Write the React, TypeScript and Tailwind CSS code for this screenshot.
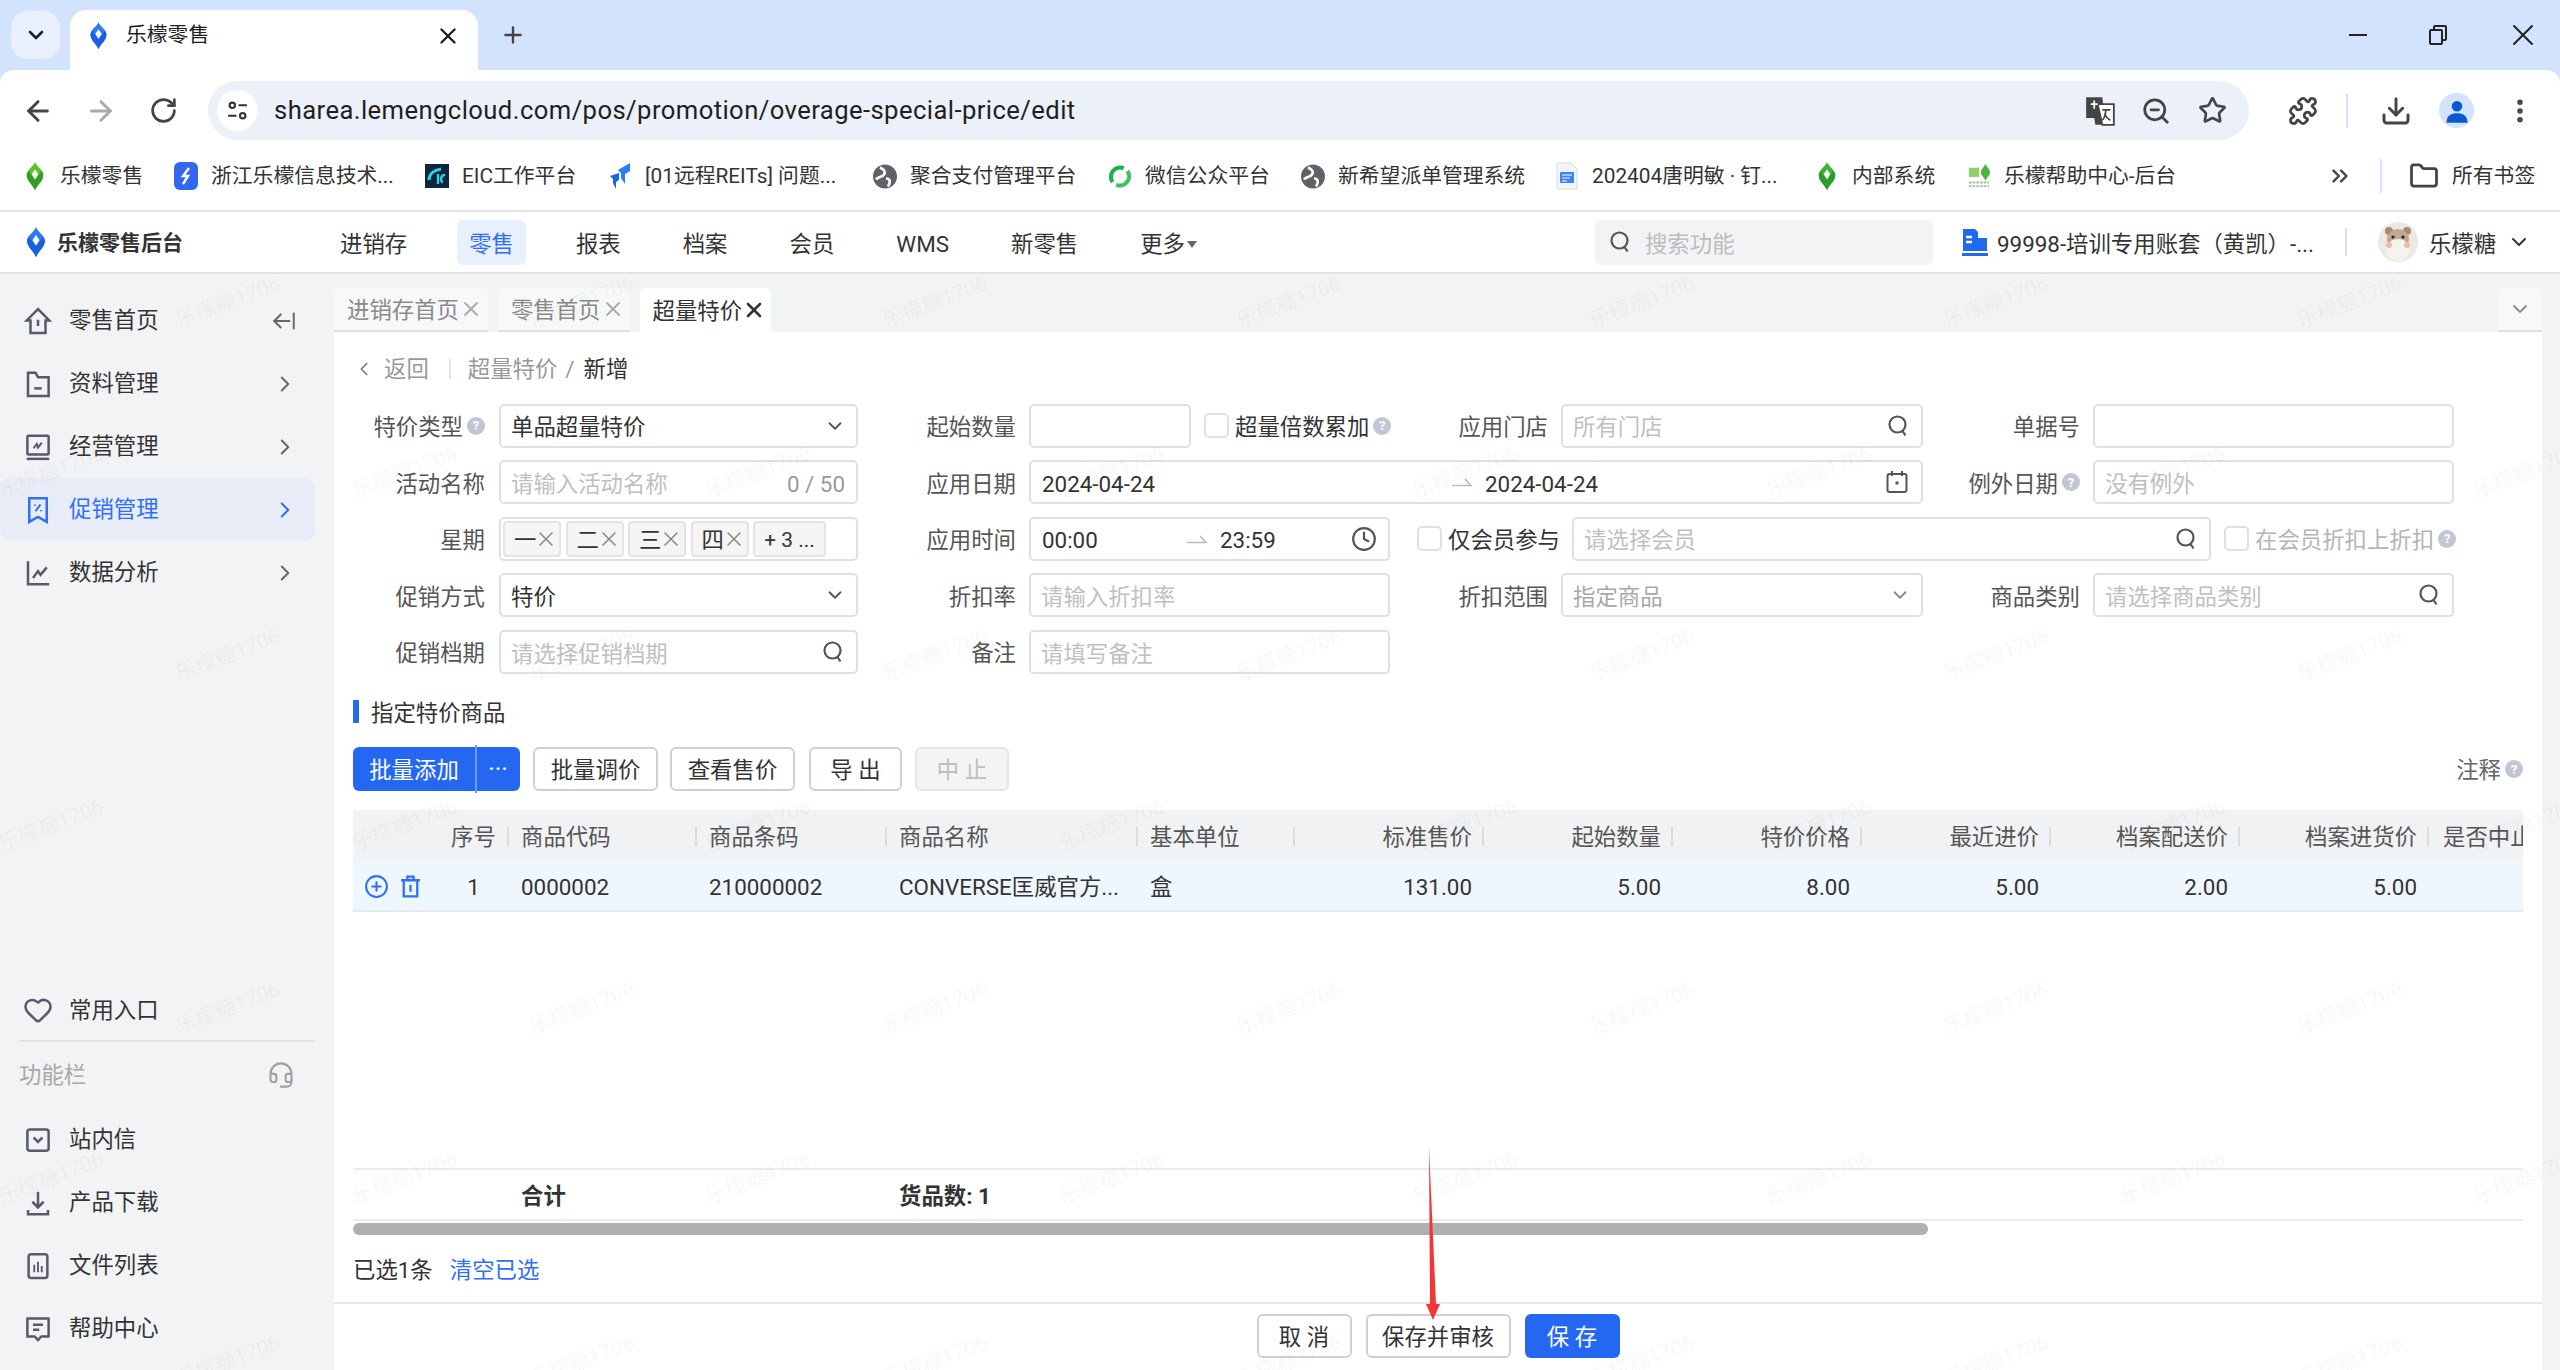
import {
  ArrowLeft,
  ArrowLeftFromLine,
  ArrowRight,
  ChevronDown,
  ChevronLeft,
  ChevronRight,
  ChevronsRight,
  Clock,
  Download,
  EllipsisVertical,
  Folder,
  Headset,
  Heart,
  Plus,
  Puzzle,
  RotateCw,
  Star,
  X,
  ZoomOut,
  CirclePlus,
} from "lucide-react";
import type { ReactNode } from "react";

const WATERMARKS: { x: number; y: number }[] = [];
for (let row = 0; row < 4; row++) {
  for (let col = 0; col < 8; col++) {
    WATERMARKS.push({ x: 230 + col * 353.6, y: 303 + row * 353 });
    WATERMARKS.push({ x: 53 + col * 353.6, y: 473 + row * 353 });
  }
}

function Logo({ color = "#2f7bf6", dark = "#1a5fe0", className = "" }: { color?: string; dark?: string; className?: string }) {
  return (
    <svg viewBox="0 0 24 34" className={className}>
      <path d="M12 0C14 6 22 9 22 16C22 23 15 27 12 34C9 27 2 23 2 16C2 9 10 6 12 0Z" fill={color} />
      <path d="M12 34C9 27 2 23 2 16C2 14 3 12 4 11L12 22L20 11C21 12 22 14 22 16C22 23 15 27 12 34Z" fill={dark} />
      <path d="M8 15L12 9L16 15L12 21Z" fill="#fff" />
    </svg>
  );
}

function HelpDot({ className = "" }: { className?: string }) {
  return (
    <span className={`inline-flex h-[18px] w-[18px] shrink-0 items-center justify-center rounded-full bg-[#c2c6d4] text-[13px] leading-none font-bold text-white ${className}`}>
      ?
    </span>
  );
}

const SIDE_PATHS: Record<string, ReactNode> = {
  home: (
    <>
      <path d="M12 2.5L3 11.5H6V21.5H18V11.5H21Z" />
      <path d="M12 11V16" />
    </>
  ),
  folder: (
    <>
      <path d="M4 3H10L12 6.5H20.5V21.5H4Z" />
      <path d="M9 15.5H15" />
    </>
  ),
  monitor: (
    <>
      <rect x="3.5" y="3" width="17" height="15" rx="1" />
      <path d="M3 21.5H21" />
      <path d="M8.5 13L11 9.5L12 12.5L15 8.5" strokeWidth="1.6" />
    </>
  ),
  promo: (
    <>
      <path d="M5 2.5H19V21.5L12 17.5L5 21.5Z" />
      <path d="M14 7.5L10 13" strokeWidth="1.6" />
      <path d="M9.5 7.5V8.5M14.5 12V13" strokeWidth="1.6" />
    </>
  ),
  chart: (
    <>
      <path d="M4 2.5V21H21" />
      <path d="M8 16L12 10.5L14 13.5L19 7.5" />
    </>
  ),
  inbox: (
    <>
      <rect x="3.5" y="3.5" width="17" height="17" rx="2" />
      <path d="M8.5 10L12 13.5L15.5 10" />
    </>
  ),
  down: (
    <>
      <path d="M12 3V15.5M7.5 11L12 15.5L16.5 11" />
      <path d="M4 17.5V21H20V17.5" />
    </>
  ),
  files: (
    <>
      <rect x="4.5" y="2.5" width="15" height="19" rx="2" />
      <path d="M9 11V17M12 8.5V17M15 12V17" strokeWidth="1.5" />
    </>
  ),
  msg: (
    <>
      <path d="M3.5 3.5H20.5V18H14.5L12 21L9.5 18H3.5Z" strokeLinejoin="round" />
      <path d="M8 8.5H16M8 12.5H13" />
    </>
  ),
};

function SideIcon({ name, active = false }: { name: string; active?: boolean }) {
  return (
    <svg
      viewBox="0 0 24 24"
      fill="none"
      strokeWidth="2"
      stroke={active ? "#2f6ffb" : "#585a6c"}
      className="h-[30px] w-[30px] shrink-0"
    >
      {SIDE_PATHS[name]}
    </svg>
  );
}

function SideItem({ icon, label, active = false, arrow = false, extra, h = "h-[63px]" }: { icon: string; label: string; active?: boolean; arrow?: boolean; extra?: ReactNode; h?: string }) {
  return (
    <div className={`flex w-[315px] items-center rounded-r-[10px] pl-[23px] ${h} ${active ? "rounded-[12px] bg-[#e8ecf7] text-[#2f6ffb]" : "text-[#333]"}`}>
      {icon === "heart" ? (
        <Heart className="h-[30px] w-[30px] shrink-0 text-[#585a6c]" strokeWidth={2} />
      ) : (
        <SideIcon name={icon} active={active} />
      )}
      <span className="ml-[16px] flex-1 text-[22.4px] leading-none">{label}</span>
      {arrow && <ChevronRight className={`mr-[17px] h-[26px] w-[26px] ${active ? "text-[#2f6ffb]" : "text-[#666]"}`} strokeWidth={1.8} />}
      {extra}
    </div>
  );
}

function Sidebar() {
  return (
    <aside className="flex w-[334px] shrink-0 flex-col justify-between pt-[15px] pb-[10px]">
      <div>
        <SideItem
          icon="home"
          label="零售首页"
          extra={<ArrowLeftFromLine className="mr-[18px] h-[26px] w-[26px] text-[#666]" strokeWidth={1.8} />}
        />
        <SideItem icon="folder" label="资料管理" arrow />
        <SideItem icon="monitor" label="经营管理" arrow />
        <SideItem icon="promo" label="促销管理" arrow active />
        <SideItem icon="chart" label="数据分析" arrow />
      </div>
      <div>
        <SideItem icon="heart" label="常用入口" h="h-[60px]" />
        <div className="ml-[19px] h-[2px] w-[296px] bg-[#dfe0e3]" />
        <div className="flex h-[66px] w-[315px] items-center justify-between pl-[19px] pr-[20px] text-[22.4px] leading-none text-[#a8a8a8]">
          功能栏
          <Headset className="h-[28px] w-[28px] text-[#a0a0a0]" strokeWidth={1.8} />
        </div>
        <SideItem icon="inbox" label="站内信" />
        <SideItem icon="down" label="产品下载" />
        <SideItem icon="files" label="文件列表" />
        <SideItem icon="msg" label="帮助中心" />
      </div>
    </aside>
  );
}

function GlobeMark() {
  return (
    <svg viewBox="0 0 24 24" className="h-[25px] w-[25px]">
      <circle cx="12" cy="12" r="12" fill="#5f6368" />
      <path d="M7 3C11 5 13 7 11 10C9 13 5 12 3 15M13 14C17 14 18 17 15 22" stroke="#fff" strokeWidth="2.6" fill="none" />
    </svg>
  );
}

const BOOKMARKS: { w: string; text: string; icon: ReactNode }[] = [
  { w: "w-[151px]", text: "乐檬零售", icon: <Logo color="#5cc22f" dark="#2f9e22" className="h-[28px] w-[22px]" /> },
  {
    w: "w-[251px]",
    text: "浙江乐檬信息技术...",
    icon: (
      <svg viewBox="0 0 24 28" className="h-[28px] w-[24px]">
        <rect width="24" height="28" rx="6" fill="#3367f0" />
        <path d="M15 6L9 14H14L9 22" stroke="#fff" strokeWidth="2.4" fill="none" />
      </svg>
    ),
  },
  {
    w: "w-[183px]",
    text: "EIC工作平台",
    icon: (
      <svg viewBox="0 0 24 24" className="h-[26px] w-[26px]">
        <rect width="24" height="24" fill="#10233f" />
        <path d="M4 16C4 10 9 6 16 5" stroke="#29d0e8" strokeWidth="3" fill="none" />
        <path d="M13 20V10M18 18C15 18 15 11 20 11" stroke="#29d0e8" strokeWidth="2.4" fill="none" />
      </svg>
    ),
  },
  {
    w: "w-[265px]",
    text: "[01远程REITs] 问题...",
    icon: (
      <svg viewBox="0 0 24 28" className="h-[28px] w-[24px]">
        <path d="M10 8L22 1V9L17 12V22L13 16V11Z" fill="#2b7cf6" />
        <path d="M2 14L11 11V18L8 20V27L5 21V17Z" fill="#1769e0" />
      </svg>
    ),
  },
  { w: "w-[235px]", text: "聚合支付管理平台", icon: <GlobeMark /> },
  {
    w: "w-[193px]",
    text: "微信公众平台",
    icon: (
      <svg viewBox="0 0 26 26" className="h-[27px] w-[27px]" fill="none" strokeWidth="4.5">
        <path d="M5 19A10 10 0 0 1 17 4" stroke="#16b24b" />
        <path d="M21 7A10 10 0 0 1 9 22" stroke="#42c25f" />
      </svg>
    ),
  },
  { w: "w-[254px]", text: "新希望派单管理系统", icon: <GlobeMark /> },
  {
    w: "w-[260px]",
    text: "202404唐明敏 · 钉...",
    icon: (
      <svg viewBox="0 0 22 28" className="h-[28px] w-[22px]">
        <path d="M1 1H15L21 7V27H1Z" fill="#f3f5fa" stroke="#d6dbe6" />
        <rect x="4" y="10" width="14" height="11" rx="1" fill="#3b82f6" />
        <path d="M6 13H16M6 16H14M6 19H11" stroke="#fff" strokeWidth="1.2" />
      </svg>
    ),
  },
  { w: "w-[152px]", text: "内部系统", icon: <Logo color="#3cb33a" dark="#2a9c2b" className="h-[28px] w-[22px]" /> },
  {
    w: "w-[220px]",
    text: "乐檬帮助中心-后台",
    icon: (
      <svg viewBox="0 0 26 26" className="h-[26px] w-[26px]">
        <path d="M2 4H13V14H2Z" fill="#8fcf6a" />
        <path d="M20 0C22 4 25 6 25 9C25 12 22 14 20 18C18 14 15 12 15 9C15 6 18 4 20 0Z" fill="#4bb53c" />
        <path d="M2 20H24M2 24H24" stroke="#b4b8b4" strokeWidth="2" strokeDasharray="3 1" />
      </svg>
    ),
  },
];

function BrowserChrome() {
  return (
    <div className="bg-[#d3e3fd] text-[#1f1f1f]">
      {/* tab strip */}
      <div className="flex h-[70px] items-end">
        <div className="mb-[11px] ml-[11px] flex h-[48px] w-[49px] items-center justify-center rounded-[16px] bg-[#e8f0fe]">
          <ChevronDown className="h-[24px] w-[24px]" strokeWidth={2.6} />
        </div>
        <div className="ml-[10px] flex h-[60px] w-[408px] items-center rounded-t-[16px] bg-white pb-[9px] pl-[18px] pr-[17px]">
          <Logo className="h-[27px] w-[21px] shrink-0" />
          <span className="ml-[17px] flex-1 text-[20.8px] leading-none">乐檬零售</span>
          <X className="h-[26px] w-[26px]" strokeWidth={2.2} />
        </div>
        <Plus className="mb-[22px] ml-[22px] h-[26px] w-[26px] text-[#444]" strokeWidth={2.2} />
        <div className="ml-auto flex h-full items-center pr-[19px]">
          <div className="h-[2px] w-[18px] bg-[#222]" />
          <div className="relative ml-[62px] h-[20px] w-[18px]">
            <div className="absolute right-0 top-0 h-[16px] w-[14px] rounded-[2px] border-2 border-[#222]" />
            <div className="absolute bottom-0 left-0 h-[16px] w-[14px] rounded-[2px] border-2 border-[#222] bg-[#d3e3fd]" />
          </div>
          <X className="ml-[58px] h-[36px] w-[36px]" strokeWidth={1.3} />
        </div>
      </div>
      {/* address row */}
      <div className="flex h-[70px] items-center rounded-t-[14px] bg-white pt-[11px]">
        <ArrowLeft className="ml-[22px] h-[32px] w-[32px] text-[#444]" strokeWidth={2.2} />
        <ArrowRight className="ml-[31px] h-[32px] w-[32px] text-[#aaa]" strokeWidth={2.2} />
        <RotateCw className="ml-[32px] h-[29px] w-[29px] text-[#444]" strokeWidth={2.2} />
        <div className="ml-[30px] flex h-[59px] w-[2041px] items-center rounded-full bg-[#ecf0f8] pl-[9px]">
          <span className="flex h-[41px] w-[41px] items-center justify-center rounded-full bg-white">
            <svg viewBox="0 0 24 24" className="h-[25px] w-[25px]" fill="none" stroke="#333" strokeWidth="2">
              <circle cx="7" cy="7" r="2.6" />
              <path d="M13 7H21M3 17H11" />
              <circle cx="17" cy="17" r="2.6" />
            </svg>
          </span>
          <span className="ml-[16px] flex-1 font-['Roboto',sans-serif] text-[25.6px] leading-none tracking-[0.43px] text-[#1f1f1f]">
            sharea.lemengcloud.com/pos/promotion/overage-special-price/edit
          </span>
          <svg viewBox="0 0 26 26" className="h-[30px] w-[30px]">
            <path d="M1 1H15L18 25H9L8 19H1Z" fill="#444" />
            <path d="M11 7H25V25H15Z" fill="#fff" stroke="#444" strokeWidth="1.6" />
            <path d="M5 7H11M8 4V11" stroke="#fff" strokeWidth="1.5" />
            <path d="M15 12H22M18 12C18 16 17 19 15 21M17 15C18 18 20 20 22 21" stroke="#444" strokeWidth="1.4" fill="none" />
          </svg>
          <ZoomOut className="ml-[26px] h-[30px] w-[30px] text-[#444]" strokeWidth={2.2} />
          <Star className="ml-[27px] mr-[22px] h-[29px] w-[29px] text-[#444]" strokeWidth={2.2} />
        </div>
        <Puzzle className="ml-[39px] h-[30px] w-[30px] text-[#444]" strokeWidth={2.2} />
        <div className="ml-[28px] h-[34px] w-[2px] bg-[#d3e3fd]" />
        <Download className="ml-[32px] h-[32px] w-[32px] text-[#444]" strokeWidth={2.2} />
        <span className="ml-[27px] flex h-[35px] w-[35px] items-center justify-center rounded-full bg-[#d3e3fd]">
          <svg viewBox="0 0 24 24" className="h-[28px] w-[28px]" fill="#0b57d0">
            <circle cx="12" cy="8" r="4.5" />
            <path d="M3 22C3 16 7 14 12 14C17 14 21 16 21 22Z" />
          </svg>
        </span>
        <EllipsisVertical className="ml-[31px] h-[30px] w-[30px] text-[#444]" strokeWidth={2.4} />
      </div>
      {/* bookmarks */}
      <div className="flex h-[72px] items-center border-b-2 border-[#e3e3e3] bg-white pt-[2px] pl-[23px]">
        {BOOKMARKS.map((b) => (
          <div key={b.text} className={`flex shrink-0 items-center ${b.w}`}>
            <span className="flex w-[24px] shrink-0 justify-center">{b.icon}</span>
            <span className="ml-[13px] whitespace-nowrap text-[20.8px] leading-none text-[#333]">{b.text}</span>
          </div>
        ))}
        <ChevronsRight className="ml-[140px] h-[26px] w-[26px] shrink-0 text-[#444]" strokeWidth={2.2} />
        <div className="ml-[27px] h-[34px] w-[2px] shrink-0 bg-[#d3e3fd]" />
        <Folder className="ml-[27px] h-[30px] w-[30px] shrink-0 text-[#444]" strokeWidth={2.2} />
        <span className="ml-[13px] whitespace-nowrap text-[20.8px] leading-none text-[#333]">所有书签</span>
      </div>
    </div>
  );
}

const QIcon = () => (
  <svg viewBox="0 0 24 24" className="h-[24px] w-[24px] shrink-0" fill="none" stroke="#555" strokeWidth="2.2">
    <circle cx="11.5" cy="10.5" r="8" />
    <path d="M16.5 17L19.5 21.5" />
  </svg>
);

function AppHeader() {
  const items = ["进销存", "零售", "报表", "档案", "会员", "WMS", "新零售"];
  return (
    <header className="flex h-[62px] items-center border-b-2 border-[#e3e3e3] bg-white">
      <Logo className="ml-[24px] h-[30px] w-[24px]" />
      <span className="ml-[9px] w-[130px] pt-[3px] text-[21px] leading-none font-bold text-[#333]">乐檬零售后台</span>
      <nav className="ml-[141px] flex gap-[38px] text-[22.4px] leading-none text-[#333]">
        {items.map((t) => (
          <span
            key={t}
            className={`flex h-[45px] items-center rounded-[6px] px-[12px] pt-[5px] ${t === "零售" ? "bg-[#e8effd] text-[#2f6ffb]" : ""}`}
          >
            {t}
          </span>
        ))}
        <span className="flex h-[45px] items-center px-[12px] pt-[5px]">
          更多
          <span className="ml-[2px] h-0 w-0 border-x-[5px] border-t-[7px] border-x-transparent border-t-[#666]" />
        </span>
      </nav>
      <div className="ml-[386px] flex h-[45px] w-[338px] items-center rounded-[5px] bg-[#f2f3f5] pl-[13px]">
        <QIcon />
        <span className="ml-[13px] pt-[5px] text-[22.4px] leading-none text-[#bdbdbd]">搜索功能</span>
      </div>
      <svg viewBox="0 0 26 28" className="ml-[29px] h-[28px] w-[26px]">
        <path d="M1 1H13L16 4V23H1Z" fill="#1f6af0" />
        <path d="M16 10H25V23H16Z" fill="#1f6af0" />
        <path d="M4 9H10M4 14H10" stroke="#fff" strokeWidth="2.4" />
        <rect y="25" width="26" height="3" fill="#1f6af0" />
      </svg>
      <span className="ml-[9px] w-[313px] whitespace-nowrap pt-[5px] text-[22.4px] leading-none text-[#333]">
        99998-培训专用账套（黄凯）-...
      </span>
      <div className="ml-[35px] h-[28px] w-[2px] bg-[#dedede]" />
      <svg viewBox="0 0 40 40" className="ml-[31px] h-[40px] w-[40px]">
        <circle cx="20" cy="20" r="20" fill="#ece8e4" />
        <circle cx="11" cy="9" r="4" fill="#a78a70" />
        <circle cx="29" cy="9" r="4" fill="#a78a70" />
        <ellipse cx="20" cy="17" rx="11" ry="10" fill="#c2a88e" />
        <ellipse cx="20" cy="28" rx="12" ry="11" fill="#f7f3ea" />
        <circle cx="15" cy="15" r="1.6" fill="#222" />
        <circle cx="25" cy="15" r="1.6" fill="#222" />
        <circle cx="11" cy="23" r="3" fill="#eebbaa" />
        <circle cx="29" cy="23" r="3" fill="#eebbaa" />
      </svg>
      <span className="ml-[11px] pt-[5px] text-[22.4px] leading-none text-[#333]">乐檬糖</span>
      <ChevronDown className="ml-[11px] h-[24px] w-[24px] text-[#333]" strokeWidth={2} />
    </header>
  );
}

function TopTab({ label, active = false }: { label: string; active?: boolean }) {
  return (
    <div
      className={`flex h-[44px] items-center rounded-t-[5px] pl-[13px] pr-[5px] text-[22.4px] leading-none ${
        active ? "bg-white text-[#333]" : "border-b-2 border-[#e0e0e0] bg-[#f7f8fa] text-[#8a8a8a]"
      }`}
    >
      <span className="pt-[3px]">{label}</span>
      <X className={`h-[24px] w-[24px] ${active ? "text-[#333]" : "text-[#aaa]"}`} strokeWidth={active ? 2.6 : 1.8} />
    </div>
  );
}

function Label({ w, children, help = false }: { w: string; children: ReactNode; help?: boolean }) {
  return (
    <div className={`flex shrink-0 items-center justify-end whitespace-nowrap text-[22.4px] leading-none text-[#555] ${w}`}>
      <span className="pt-[3px]">{children}</span>
      {help && <HelpDot className="ml-[4px]" />}
    </div>
  );
}

function TextInput({ w, placeholder, value, suffix }: { w: string; placeholder?: string; value?: string; suffix?: ReactNode }) {
  return (
    <div className={`flex h-[44px] shrink-0 items-center rounded-[5px] border-2 border-[#e0e0e0] bg-white pr-[11px] ${w}`}>
      <input
        readOnly
        placeholder={placeholder}
        value={value ?? ""}
        className="h-full w-0 flex-1 bg-transparent pl-[10px] pt-[3px] text-[22.4px] leading-none text-[#333] outline-none placeholder:text-[#c0c0c0]"
      />
      {suffix}
    </div>
  );
}

function SelectBox({ w, value, muted = false }: { w: string; value: string; muted?: boolean }) {
  return (
    <div className={`flex h-[44px] shrink-0 items-center justify-between rounded-[5px] border-2 border-[#e0e0e0] bg-white pl-[10px] pr-[10px] text-[22.4px] leading-none ${muted ? "text-[#a8a8a8]" : "text-[#333]"} ${w}`}>
      <span className="pt-[3px]">{value}</span>
      <ChevronDown className={`h-[22px] w-[22px] ${muted ? "text-[#888]" : "text-[#555]"}`} strokeWidth={2} />
    </div>
  );
}

function CheckBox({ className = "" }: { className?: string }) {
  return <span className={`h-[25px] w-[25px] shrink-0 rounded-[5px] border-2 border-[#e0e0e0] bg-white ${className}`} />;
}

function DayTag({ label }: { label: string }) {
  return (
    <span className="flex h-[36px] w-[58px] items-center rounded-[4px] border-2 border-[#e4e4e4] bg-[#f5f5f5] pl-[9px] text-[22.4px] leading-none text-[#333]">
      <span className="pt-[3px]">{label}</span>
      <X className="ml-[-2px] h-[24px] w-[24px] shrink-0 text-[#888]" strokeWidth={1.5} />
    </span>
  );
}

// half-barb arrow used between range values
const RangeArrow = () => (
  <svg viewBox="0 0 20 12" className="h-[12px] w-[20px] shrink-0" fill="none" stroke="#bbb" strokeWidth="1.6">
    <path d="M0 9.5H19L13 3" />
  </svg>
);

const CalendarIcon = () => (
  <svg viewBox="0 0 22 24" className="h-[24px] w-[22px] shrink-0" fill="none" stroke="#555" strokeWidth="2">
    <rect x="1.5" y="4" width="19" height="18" rx="2" />
    <path d="M6 1V6M16 1V6" />
    <path d="M9.5 13H12.5" strokeWidth="3" />
  </svg>
);

function PromoForm() {
  return (
    <div className="flex flex-col gap-[12.6px]">
      <div className="flex h-[44px] items-center">
        <Label w="w-[132px] mr-[14px]" help>特价类型</Label>
        <SelectBox w="w-[359px]" value="单品超量特价" />
        <Label w="w-[158px] mr-[13px]">起始数量</Label>
        <TextInput w="w-[162px]" />
        <CheckBox className="ml-[13px]" />
        <span className="ml-[6px] flex w-[155px] items-center whitespace-nowrap text-[22.4px] leading-none text-[#333]">
          <span className="pt-[3px]">超量倍数累加</span>
          <HelpDot className="ml-[4px]" />
        </span>
        <Label w="w-[158px] mr-[13px]">应用门店</Label>
        <TextInput w="w-[362px]" placeholder="所有门店" suffix={<QIcon />} />
        <Label w="w-[157px] mr-[13px]">单据号</Label>
        <TextInput w="w-[361px]" />
      </div>
      <div className="flex h-[44px] items-center">
        <Label w="w-[132px] mr-[14px]">活动名称</Label>
        <TextInput
          w="w-[359px]"
          placeholder="请输入活动名称"
          suffix={<span className="pt-[3px] text-[22.4px] leading-none text-[#999]">0 / 50</span>}
        />
        <Label w="w-[158px] mr-[13px]">应用日期</Label>
        <div className="flex h-[44px] w-[894px] shrink-0 items-center rounded-[5px] border-2 border-[#e0e0e0] pl-[11px] pr-[13px] text-[22.4px] leading-none text-[#333]">
          <span className="w-[410px] pt-[3px]">2024-04-24</span>
          <RangeArrow />
          <span className="ml-[13px] flex-1 pt-[3px]">2024-04-24</span>
          <CalendarIcon />
        </div>
        <Label w="w-[157px] mr-[13px]" help>例外日期</Label>
        <TextInput w="w-[361px]" placeholder="没有例外" />
      </div>
      <div className="flex h-[44px] items-center">
        <Label w="w-[132px] mr-[14px]">星期</Label>
        <div className="flex h-[44px] w-[359px] shrink-0 items-center gap-[4.5px] rounded-[5px] border-2 border-[#e0e0e0] pl-[2px]">
          <DayTag label="一" />
          <DayTag label="二" />
          <DayTag label="三" />
          <DayTag label="四" />
          <span className="flex h-[36px] w-[73px] items-center justify-center rounded-[4px] border-2 border-[#e4e4e4] bg-[#f5f5f5] pt-[3px] text-[20.8px] leading-none text-[#333]">
            + 3 ...
          </span>
        </div>
        <Label w="w-[158px] mr-[13px]">应用时间</Label>
        <div className="flex h-[44px] w-[361px] shrink-0 items-center rounded-[5px] border-2 border-[#e0e0e0] pl-[11px] pr-[11px] text-[22.4px] leading-none text-[#333]">
          <span className="w-[145px] pt-[3px]">00:00</span>
          <RangeArrow />
          <span className="ml-[13px] flex-1 pt-[3px]">23:59</span>
          <Clock className="h-[26px] w-[26px] text-[#555]" strokeWidth={2} />
        </div>
        <CheckBox className="ml-[27px]" />
        <span className="ml-[6px] w-[111px] whitespace-nowrap pt-[3px] text-[22.4px] leading-none text-[#333]">仅会员参与</span>
        <TextInput w="w-[639px] ml-[13px]" placeholder="请选择会员" suffix={<QIcon />} />
        <CheckBox className="ml-[13px]" />
        <span className="ml-[6px] flex items-center whitespace-nowrap text-[22.4px] leading-none text-[#b5b5b5]">
          <span className="pt-[3px]">在会员折扣上折扣</span>
          <HelpDot className="ml-[4px]" />
        </span>
      </div>
      <div className="flex h-[44px] items-center">
        <Label w="w-[132px] mr-[14px]">促销方式</Label>
        <SelectBox w="w-[359px]" value="特价" />
        <Label w="w-[158px] mr-[13px]">折扣率</Label>
        <TextInput w="w-[361px]" placeholder="请输入折扣率" />
        <Label w="w-[158px] mr-[13px]">折扣范围</Label>
        <SelectBox w="w-[362px]" value="指定商品" muted />
        <Label w="w-[157px] mr-[13px]">商品类别</Label>
        <TextInput w="w-[361px]" placeholder="请选择商品类别" suffix={<QIcon />} />
      </div>
      <div className="flex h-[44px] items-center">
        <Label w="w-[132px] mr-[14px]">促销档期</Label>
        <TextInput w="w-[359px]" placeholder="请选择促销档期" suffix={<QIcon />} />
        <Label w="w-[158px] mr-[13px]">备注</Label>
        <TextInput w="w-[361px]" placeholder="请填写备注" />
      </div>
    </div>
  );
}

function OutlineBtn({ w, children, disabled = false }: { w: string; children: ReactNode; disabled?: boolean }) {
  return (
    <button
      className={`flex h-[44px] items-center justify-center rounded-[6px] border-2 pt-[3px] text-[22.4px] leading-none ${w} ${
        disabled ? "border-[#e6e6e6] bg-[#f4f4f4] text-[#bdbdbd]" : "border-[#d0d0d0] bg-white text-[#333]"
      }`}
    >
      {children}
    </button>
  );
}

const GRID = "grid grid-cols-[85px_71px_188px_190px_251px_157px_189px_189px_189px_189px_189px_189px_94px]";

const HEADERS: { t: string; right?: boolean }[] = [
  { t: "商品代码" },
  { t: "商品条码" },
  { t: "商品名称" },
  { t: "基本单位" },
  { t: "标准售价", right: true },
  { t: "起始数量", right: true },
  { t: "特价价格", right: true },
  { t: "最近进价", right: true },
  { t: "档案配送价", right: true },
  { t: "档案进货价", right: true },
];

const VALUES = ["0000002", "210000002", "CONVERSE匡威官方...", "盒", "131.00", "5.00", "8.00", "5.00", "2.00", "5.00"];

function GoodsTable() {
  return (
    <div className="text-[22.4px] leading-none whitespace-nowrap">
      <div className={`${GRID} h-[52px] items-center overflow-hidden bg-[#f1f2f4] text-[#555]`}>
        <span />
        <span className="flex h-[19px] items-center justify-center border-r-2 border-[#dcdcdc] pt-[3px] pl-[2px]">序号</span>
        {HEADERS.map((h) => (
          <span
            key={h.t}
            className={`flex h-[19px] items-center border-r-2 border-[#dcdcdc] pt-[3px] ${h.right ? "justify-end pr-[10px]" : "pl-[12px]"}`}
          >
            {h.t}
          </span>
        ))}
        <span className="pt-[3px] pl-[14px]">是否中止</span>
      </div>
      <div className={`${GRID} h-[50px] items-center border-b-2 border-[#e5e8ec] bg-[#eff7fe] text-[#333]`}>
        <span className="flex items-center pl-[11px] text-[#2f6ffb]">
          <CirclePlus className="h-[25px] w-[25px]" strokeWidth={2} />
          <svg viewBox="0 0 24 24" className="ml-[9px] h-[25px] w-[25px]" fill="none" stroke="currentColor" strokeWidth="2.2">
            <path d="M3 6H21M9 6V2.5H15V6M5.5 6V21.5H18.5V6M12 10.5V17" />
          </svg>
        </span>
        <span className="pt-[3px] text-center">1</span>
        {VALUES.map((v, i) => (
          <span key={i} className={`pt-[3px] ${i > 3 ? "pr-[12px] text-right" : "pl-[12px]"}`}>
            {v}
          </span>
        ))}
        <span />
      </div>
      <div className="h-[256px]" />
      <div className={`${GRID} h-[53px] items-center border-y-2 border-[#ececec] font-bold text-[#333]`}>
        <span />
        <span />
        <span className="pt-[3px] pl-[12px]">合计</span>
        <span />
        <span className="pt-[3px] pl-[12px]">货品数: 1</span>
      </div>
    </div>
  );
}

function MainPanel() {
  return (
    <main className="flex w-[2208px] shrink-0 flex-col">
      <div className="flex h-[58px] items-end gap-[10px]">
        <TopTab label="进销存首页" />
        <TopTab label="零售首页" />
        <TopTab label="超量特价" active />
        <div className="ml-auto flex h-[44px] w-[44px] items-center justify-center rounded-t-[5px] border-b-2 border-[#e0e0e0] bg-[#f7f8fa]">
          <ChevronDown className="h-[24px] w-[24px] text-[#888]" strokeWidth={1.8} />
        </div>
      </div>
      <div className="flex flex-1 flex-col bg-white">
        <div className="flex-1 px-[19px]">
          <div className="flex h-[72px] items-center pt-[3px] text-[22.4px] leading-none">
            <ChevronLeft className="h-[22px] w-[22px] text-[#777]" strokeWidth={1.8} />
            <span className="ml-[9px] text-[#999]">返回</span>
            <span className="ml-[20px] h-[20px] w-[2px] bg-[#e5e5e5]" />
            <span className="ml-[17px] text-[#999]">超量特价</span>
            <span className="ml-[8px] text-[#999]">/</span>
            <span className="ml-[9px] text-[#333]">新增</span>
          </div>
          <PromoForm />
          <div className="mt-[26px] flex h-[23px] items-center">
            <span className="h-[23px] w-[6px] rounded-[1px] bg-[#2468f2]" />
            <span className="ml-[12px] pt-[3px] text-[22.4px] leading-none text-[#333]">指定特价商品</span>
          </div>
          <div className="mt-[24px] flex h-[44px] items-center">
            <div className="flex h-[44px] w-[167px] items-center rounded-[6px] bg-[#2468f2] text-[22.4px] leading-none text-white">
              <span className="w-[124px] border-r-2 border-[#6b9bf7] pt-[14px] pb-[11px] text-center">批量添加</span>
              <span className="flex-1 text-center text-[18px] font-bold tracking-[1px]">···</span>
            </div>
            <OutlineBtn w="ml-[13px] w-[125px]">批量调价</OutlineBtn>
            <OutlineBtn w="ml-[12px] w-[125px]">查看售价</OutlineBtn>
            <OutlineBtn w="ml-[14px] w-[93px]">导 出</OutlineBtn>
            <OutlineBtn w="ml-[13px] w-[94px]" disabled>中 止</OutlineBtn>
            <span className="ml-auto flex items-center text-[22.4px] leading-none text-[#666]">
              <span className="pt-[3px]">注释</span>
              <HelpDot className="ml-[4px]" />
            </span>
          </div>
          <div className="mt-[19px]">
            <GoodsTable />
          </div>
          <div className="mt-[2px] h-[12px] w-[1575px] rounded-full bg-[#b0b0b0]" />
          <div className="flex h-[67px] items-center pt-[3px] text-[22.4px] leading-none">
            <span className="text-[#333]">已选1条</span>
            <span className="ml-[17px] text-[#2f6ffb]">清空已选</span>
          </div>
        </div>
        <div className="flex h-[68px] justify-center gap-[14px] border-t-2 border-[#e6e6e6] pt-[10px]">
          <OutlineBtn w="w-[95px]">取 消</OutlineBtn>
          <OutlineBtn w="w-[145px]">保存并审核</OutlineBtn>
          <button className="flex h-[44px] w-[95px] items-center justify-center rounded-[6px] bg-[#2468f2] pt-[3px] text-[22.4px] leading-none text-white">
            保 存
          </button>
        </div>
      </div>
    </main>
  );
}

export default function App() {
  return (
    <div className="relative flex h-[1370px] w-[2560px] flex-col overflow-hidden bg-[#f2f3f5] font-['Roboto','Noto_Sans_CJK_SC',sans-serif]">
      <BrowserChrome />
      <AppHeader />
      <div className="flex flex-1 overflow-hidden">
        <Sidebar />
        <MainPanel />
      </div>
      {/* watermark over the app */}
      <div className="pointer-events-none absolute inset-x-0 bottom-0 top-[212px] overflow-hidden">
        {WATERMARKS.map((m, i) => (
          <span
            key={i}
            className="absolute -rotate-[21deg] whitespace-nowrap text-[21px] leading-none text-black/[0.045]"
            style={{ left: m.x - 57, top: m.y - 212 - 11 }}
          >
            乐檬糖1706
          </span>
        ))}
      </div>
      {/* red annotation arrow */}
      <svg viewBox="0 0 30 185" className="pointer-events-none absolute left-[1417px] top-[1140px] h-[185px] w-[30px]">
        <path d="M12 7L19 164L23 164L16 180L9 164L13 164Z" fill="#f23535" />
      </svg>
    </div>
  );
}
